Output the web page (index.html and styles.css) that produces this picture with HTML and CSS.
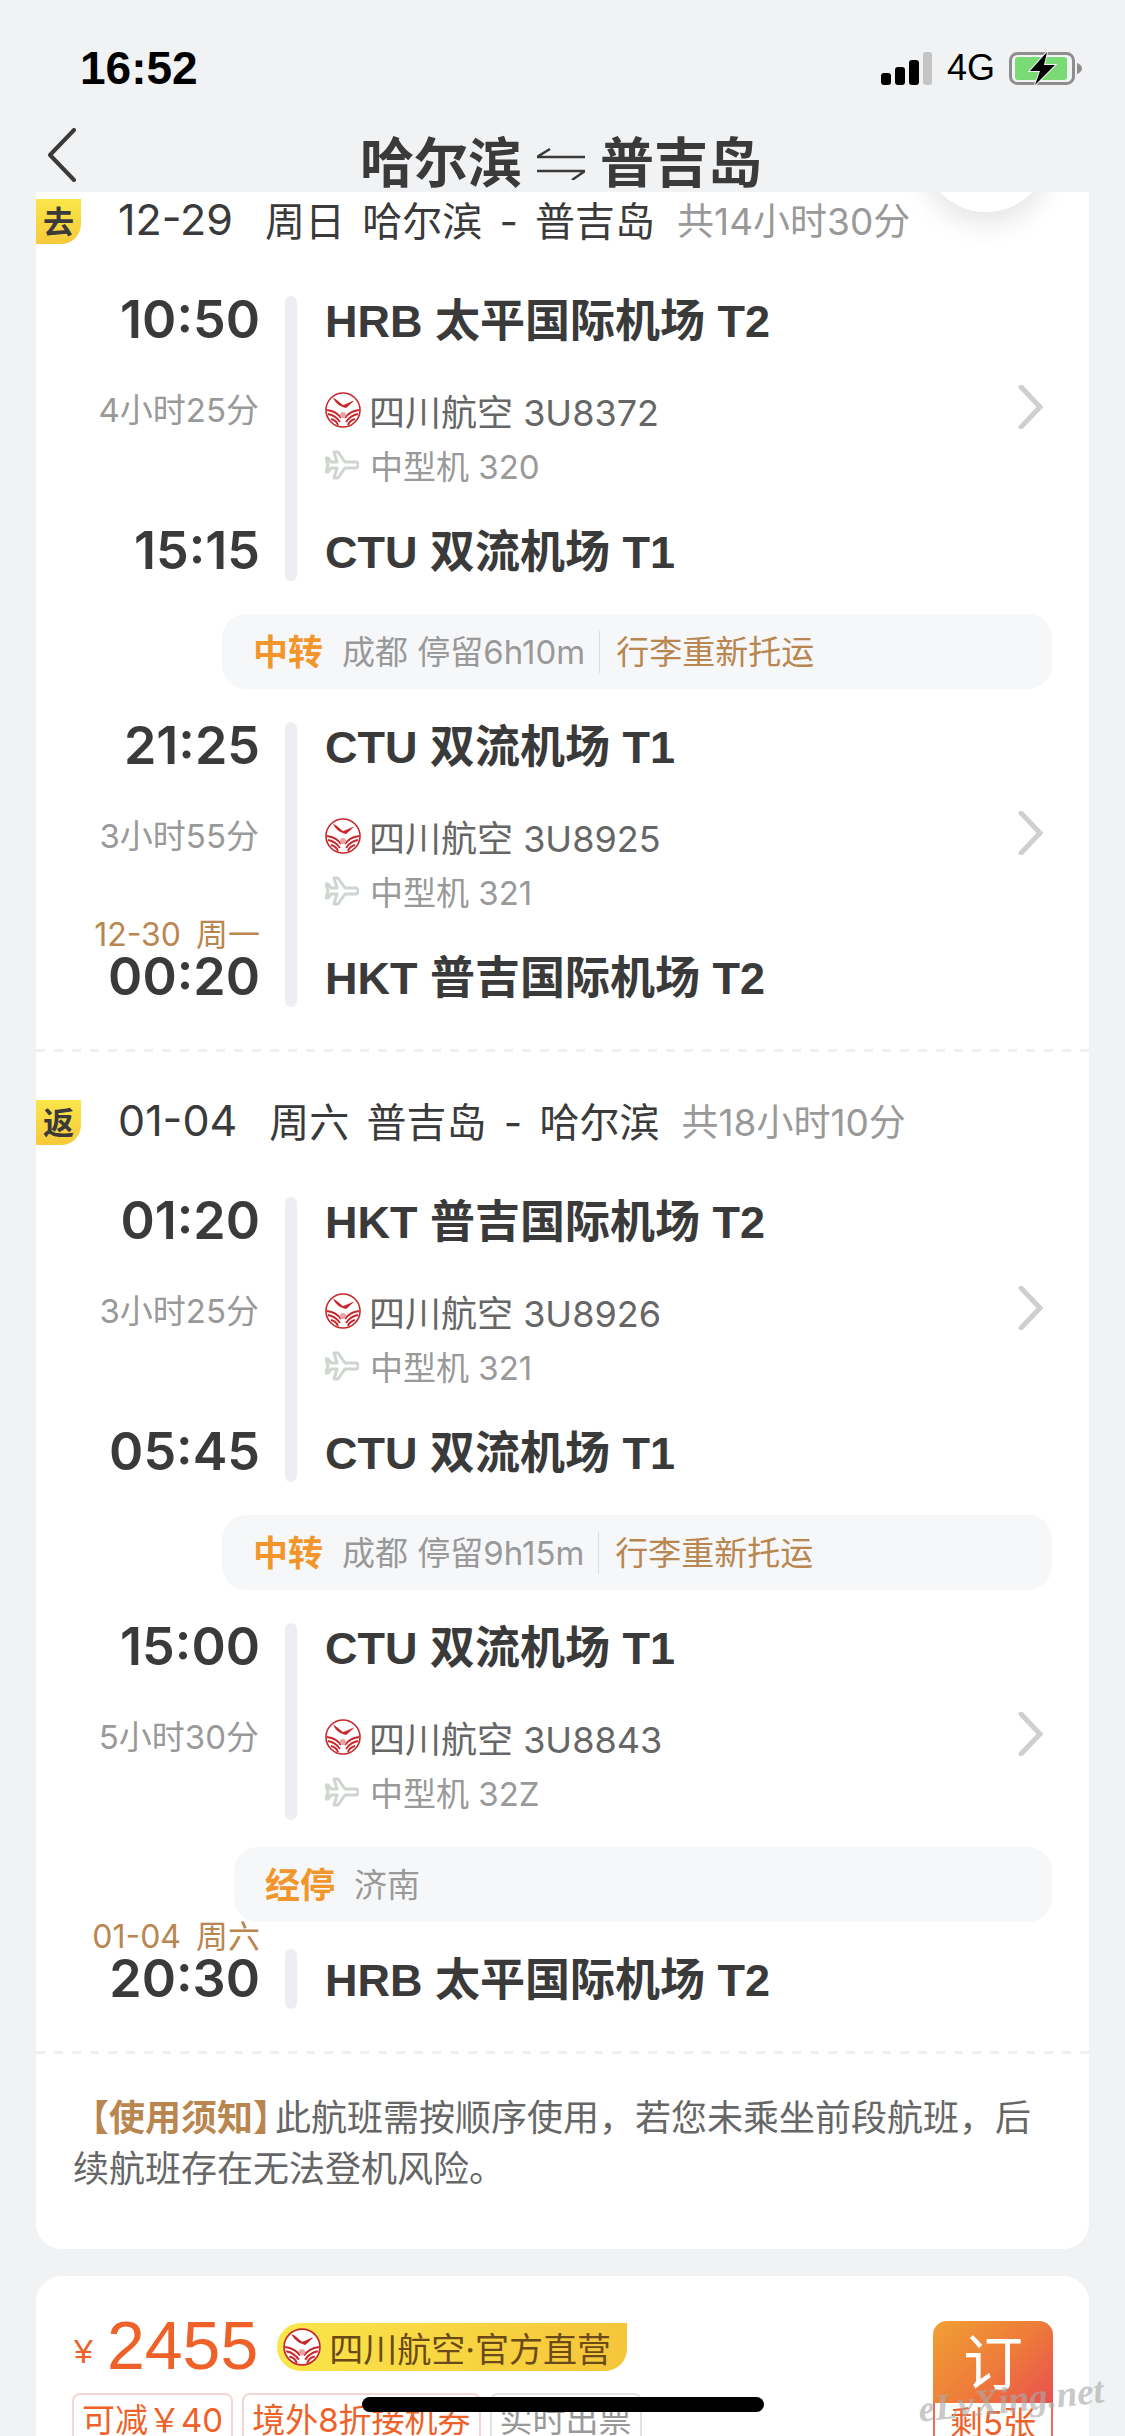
FILE: index.html
```html
<!DOCTYPE html>
<html lang="zh-CN">
<head>
	<meta charset="utf8">
	<title>哈尔滨 - 普吉岛</title>
	<link rel="stylesheet" href="styles.css">
</head>
<body>
	<svg class="defs" width="0" height="0">
		<symbol id="logo" viewBox="0 0 36 36">
			<circle cx="18" cy="18" r="17" fill="#fff" stroke="#c8272b" stroke-width="1.6"/>
			<path d="M8 6C12 7 15 11 18 13L21 12C24 11 26 9 29 9C26 11 24 14 21 16C16 15 11 12 8 6Z" fill="#c8272b"/>
			<path d="M2 18C9 19 14 23 16 26M3 22C9 23 13 27 15 30M6 27C10 28 12 30 13 33M34 18C27 19 22 23 20 26M33 22C27 23 23 27 21 30M30 27C26 28 24 30 23 33" fill="none" stroke="#c8272b" stroke-width="1.9"/>
			<circle cx="18" cy="23" r="3" fill="#e9a3a3"/>
		</symbol>
		<symbol id="plane" viewBox="0 0 34 30">
			<path d="M31 12C34 13 34 17 31 18L20 18L13 28L9 28L12 18L6 18L3 22L1 22L3 15L1 8L3 8L6 12L12 12L9 2L13 2L20 12Z" fill="#fff" stroke="#ced6cf" stroke-width="3" stroke-linejoin="round"/>
		</symbol>
		<symbol id="chevron" viewBox="0 0 25 44">
			<path d="M3 2L22 22L3 42" fill="none" stroke="#cfcfcf" stroke-width="5" stroke-linecap="round"/>
		</symbol>
	</svg>

	<div class="page">
		<div class="status">
			<span class="clock">16:52</span>
			<div class="status-right">
				<svg class="signal" width="51" height="33" viewBox="0 0 51 33">
					<rect x="0" y="21" width="10" height="12" rx="3" fill="#000"/>
					<rect x="14" y="15" width="10" height="18" rx="3" fill="#000"/>
					<rect x="28" y="8" width="10" height="25" rx="3" fill="#000"/>
					<rect x="42" y="0" width="9" height="33" rx="3" fill="#c4c4c4"/>
				</svg>
				<span class="net">4G</span>
				<svg class="battery" width="73" height="33" viewBox="0 0 73 33">
					<rect x="1.5" y="1.5" width="63" height="30" rx="7" fill="none" stroke="#8e8e8e" stroke-width="3"/>
					<rect x="6" y="5" width="52" height="23" rx="3" fill="#7ada76"/>
					<path d="M68 11C71 12 73 14 73 16.5C73 19 71 21 68 22Z" fill="#8e8e8e"/>
					<path d="M38 0L21 19L31 19L26 33L46 13L35 13Z" fill="#000" stroke="#f1f2f4" stroke-width="2" paint-order="stroke"/>
				</svg>
			</div>
		</div>

		<div class="nav">
			<svg class="back" width="30" height="54" viewBox="0 0 30 54">
				<path d="M27 2L3 27L27 52" fill="none" stroke="#3a3a3a" stroke-width="4" stroke-linecap="round" stroke-linejoin="round"/>
			</svg>
			<div class="route-title">
				<span>哈尔滨</span>
				<svg width="48" height="32" viewBox="0 0 48 32">
					<path d="M0 9H48M0 9L13 1M0 23H48M48 23L35 32" fill="none" stroke="#3a3a3a" stroke-width="2.5"/>
				</svg>
				<span>普吉岛</span>
			</div>
		</div>

		<div class="card detail">
			<div class="bubble"></div>

			<div class="day-head">
				<span class="tag">去</span>
				<span class="day-date">12-29</span>
				<span class="day-route">周日 哈尔滨 - 普吉岛</span>
				<span class="day-total">共14小时30分</span>
			</div>

			<div class="leg">
				<div class="leg-left">
					<div class="time">10:50</div>
					<div class="dur">4小时25分</div>
					<div class="time end">15:15</div>
				</div>
				<div class="bar"></div>
				<div class="leg-right">
					<div class="station">HRB 太平国际机场 T2</div>
					<div class="airline">
						<svg class="logo-icon"><use href="#logo"/></svg>
						<span>四川航空 3U8372</span>
						<svg class="chevron"><use href="#chevron"/></svg>
					</div>
					<div class="plane"><svg class="plane-icon"><use href="#plane"/></svg><span>中型机 320</span></div>
					<div class="station end">CTU 双流机场 T1</div>
				</div>
			</div>

			<div class="pill transfer">
				<b>中转</b><span class="pill-gray">成都 停留6h10m</span><i class="pill-line"></i><span class="pill-brown">行李重新托运</span>
			</div>

			<div class="leg">
				<div class="leg-left">
					<div class="time">21:25</div>
					<div class="dur">3小时55分</div>
					<div class="time end"><span class="next-date">12-30 周一</span>00:20</div>
				</div>
				<div class="bar"></div>
				<div class="leg-right">
					<div class="station">CTU 双流机场 T1</div>
					<div class="airline">
						<svg class="logo-icon"><use href="#logo"/></svg>
						<span>四川航空 3U8925</span>
						<svg class="chevron"><use href="#chevron"/></svg>
					</div>
					<div class="plane"><svg class="plane-icon"><use href="#plane"/></svg><span>中型机 321</span></div>
					<div class="station end">HKT 普吉国际机场 T2</div>
				</div>
			</div>

			<div class="dashed"></div>

			<div class="day-head">
				<span class="tag">返</span>
				<span class="day-date">01-04</span>
				<span class="day-route">周六 普吉岛 - 哈尔滨</span>
				<span class="day-total">共18小时10分</span>
			</div>

			<div class="leg">
				<div class="leg-left">
					<div class="time">01:20</div>
					<div class="dur">3小时25分</div>
					<div class="time end">05:45</div>
				</div>
				<div class="bar"></div>
				<div class="leg-right">
					<div class="station">HKT 普吉国际机场 T2</div>
					<div class="airline">
						<svg class="logo-icon"><use href="#logo"/></svg>
						<span>四川航空 3U8926</span>
						<svg class="chevron"><use href="#chevron"/></svg>
					</div>
					<div class="plane"><svg class="plane-icon"><use href="#plane"/></svg><span>中型机 321</span></div>
					<div class="station end">CTU 双流机场 T1</div>
				</div>
			</div>

			<div class="pill transfer">
				<b>中转</b><span class="pill-gray">成都 停留9h15m</span><i class="pill-line"></i><span class="pill-brown">行李重新托运</span>
			</div>

			<div class="leg leg-stop">
				<div class="leg-left">
					<div class="time">15:00</div>
					<div class="dur">5小时30分</div>
				</div>
				<div class="bar"></div>
				<div class="leg-right">
					<div class="station">CTU 双流机场 T1</div>
					<div class="airline">
						<svg class="logo-icon"><use href="#logo"/></svg>
						<span>四川航空 3U8843</span>
						<svg class="chevron"><use href="#chevron"/></svg>
					</div>
					<div class="plane"><svg class="plane-icon"><use href="#plane"/></svg><span>中型机 32Z</span></div>
				</div>
			</div>

			<div class="pill stop">
				<b>经停</b><span class="pill-gray">济南</span>
			</div>

			<div class="leg leg-last">
				<div class="leg-left">
					<div class="time end"><span class="next-date">01-04 周六</span>20:30</div>
				</div>
				<div class="bar"></div>
				<div class="leg-right">
					<div class="station end">HRB 太平国际机场 T2</div>
				</div>
			</div>

			<div class="dashed"></div>

			<p class="notice"><b>【使用须知】</b>此航班需按顺序使用，若您未乘坐前段航班，后续航班存在无法登机风险。</p>
		</div>

		<div class="card price-card">
			<div class="price-main">
				<div class="price-row">
					<span class="yen">¥</span>
					<span class="amount">2455</span>
					<span class="badge"><svg class="badge-logo"><use href="#logo"/></svg>四川航空·官方直营</span>
				</div>
				<div class="tags">
					<span class="chip">可减￥40</span>
					<span class="chip">境外8折接机券</span>
					<span class="chip chip-gray">实时出票</span>
				</div>
			</div>
			<div class="book">
				<div class="book-top">订</div>
				<div class="book-left">剩5张</div>
			</div>
		</div>

		<div class="home-bar"></div>
		<div class="watermark">eLvXing.net</div>
	</div>
</body>
</html>
```

FILE: styles.css
```css
html, body{
	margin: 0;
	padding: 0;
}
body{
	font-family: Inter, "Noto Sans CJK SC", sans-serif;
	color: #3a3a3a;
}
.defs{
	position: absolute;
}
.page{
	position: relative;
	width: 1125px;
	height: 2436px;
	overflow: hidden;
	background-color: #f1f2f4;
}

/* status bar */
.status{
	display: flex;
	justify-content: space-between;
	align-items: flex-start;
	box-sizing: border-box;
	height: 130px;
	padding: 44px 43px 0 80px;
	color: #000;
}
.clock{
	font-family: "Liberation Sans", sans-serif;
	font-size: 46px;
	font-weight: bold;
	line-height: 48px;
}
.status-right{
	display: flex;
	align-items: center;
	gap: 15px;
	height: 48px;
}
.net{
	margin-right: -1px;
	font-family: "Liberation Sans", sans-serif;
	font-size: 36px;
	line-height: 48px;
}

/* nav */
.nav{
	display: grid;
	grid-template-columns: 1fr auto 1fr;
	align-items: center;
	height: 62px;
	padding-right: 3px;
}
.back{
	margin: -12px 0 0 47px;
}
.route-title{
	grid-column: 2;
	display: flex;
	align-items: center;
	gap: 15px;
	padding-top: 5px;
	font-size: 54px;
	font-weight: bold;
	line-height: 57px;
}

/* cards */
.card{
	position: relative;
	margin: 0 36px;
	background-color: #fff;
	overflow: hidden;
}
.detail{
	padding-top: 7px;
	border-radius: 0 0 26px 26px;
}
.bubble{
	position: absolute;
	top: -108px;
	left: 886px;
	width: 128px;
	height: 128px;
	border-radius: 50%;
	background-color: #fff;
	box-shadow: 0 12px 26px rgba(0,0,0,.1);
}

.day-head{
	position: relative;
	display: flex;
	align-items: center;
	height: 45px;
	margin-bottom: 52px;
	font-size: 40px;
}
.tag{
	width: 45px;
	height: 45px;
	line-height: 45px;
	text-align: center;
	font-size: 31px;
	font-weight: bold;
	border-radius: 0 0 20px 0;
	background: linear-gradient(#fbe64a, #f6c93a);
}
.day-date{
	margin-left: 37px;
	margin-right: 32px;
	padding-bottom: 6px;
	font-size: 43px;
}
.day-route{
	margin-right: 22px;
	padding-bottom: 6px;
	font-size: 40px;
	word-spacing: 6px;
}
.day-total{
	padding-bottom: 6px;
	font-size: 37px;
	color: #999;
}

/* flight leg */
.leg{
	display: flex;
	height: 285px;
}
.leg-stop{
	height: 197px;
}
.leg-last{
	height: 60px;
}
.leg-left{
	display: flex;
	flex-direction: column;
	align-items: flex-end;
	flex: none;
	width: 224px;
}
.time{
	position: relative;
	height: 48px;
	line-height: 48px;
	font-size: 52px;
	font-weight: 600;
}
.end{
	margin-top: auto;
	margin-bottom: 6px;
}
.dur{
	margin: 42px 1px 0 0;
	height: 48px;
	line-height: 48px;
	font-size: 33px;
	color: #999;
}
.next-date{
	position: absolute;
	right: 0;
	bottom: 48px;
	height: 36px;
	line-height: 36px;
	white-space: nowrap;
	font-size: 32px;
	font-weight: normal;
	word-spacing: 6px;
	color: #b98650;
}
.bar{
	flex: none;
	width: 12px;
	margin-left: 25px;
	border-radius: 6px;
	background-color: #eceef2;
}
.leg-right{
	display: flex;
	flex-direction: column;
	flex: 1;
	padding: 0 46px 0 28px;
}
.station{
	height: 48px;
	line-height: 52px;
	font-family: "Liberation Sans", "Noto Sans CJK SC", sans-serif;
	font-size: 45px;
	font-weight: bold;
	white-space: nowrap;
}
.airline{
	display: flex;
	align-items: center;
	height: 48px;
	margin-top: 42px;
	font-size: 36px;
	color: #666;
}
.logo-icon{
	width: 36px;
	height: 36px;
	margin-right: 8px;
}
.chevron{
	width: 25px;
	height: 44px;
	margin: -6px 0 0 auto;
}
.plane{
	display: flex;
	align-items: center;
	height: 48px;
	margin-top: 7px;
	font-size: 33px;
	color: #999;
}
.plane-icon{
	width: 34px;
	height: 30px;
	margin-right: 11px;
}

/* transfer and stop pills */
.pill{
	display: flex;
	align-items: center;
	box-sizing: border-box;
	height: 75px;
	padding-bottom: 4px;
	border-radius: 24px;
	background-color: #f6f7f9;
	font-size: 33px;
	white-space: nowrap;
}
.pill b{
	margin-right: 19px;
	font-size: 35px;
	color: #f2962c;
}
.transfer{
	margin: 33px 37px 33px 186px;
	padding-left: 31px;
}
.stop{
	margin: 27px 37px 27px 198px;
	padding-left: 31px;
}
.pill-gray{
	color: #999;
}
.pill-line{
	width: 1px;
	height: 42px;
	margin: 4px 16px 0 14px;
	background-color: #ddd;
}
.pill-brown{
	color: #b98650;
}

.dashed{
	height: 3px;
	margin-top: 42px;
	background: repeating-linear-gradient(90deg, #eff0f2 0, #eff0f2 9px, transparent 9px, transparent 18px);
}
.dashed + .day-head{
	margin-top: 48px;
}
.notice{
	margin: 0;
	padding: 39px 54px 54px 37px;
	font-size: 36px;
	line-height: 51px;
	color: #666;
}
.notice b{
	margin-right: -14px;
	color: #b98650;
}

/* price card */
.price-card{
	display: flex;
	justify-content: space-between;
	height: 200px;
	margin-top: 27px;
	border-radius: 26px 26px 0 0;
}
.price-main{
	padding: 42px 0 0 36px;
}
.price-row{
	display: flex;
	align-items: center;
	height: 54px;
	color: #ee6229;
}
.yen{
	margin: 12px 14px 0 2px;
	font-family: "Liberation Sans", sans-serif;
	font-size: 34px;
}
.amount{
	font-family: "Liberation Sans", sans-serif;
	font-size: 68px;
	line-height: 54px;
}
.badge{
	display: flex;
	align-items: center;
	height: 48px;
	margin: 4px 0 0 19px;
	padding-right: 16px;
	border-radius: 24px 0 22px 24px;
	background: linear-gradient(90deg, #fbe64a, #f5c53a);
	font-size: 34px;
	color: #6b4a17;
}
.badge-logo{
	width: 38px;
	height: 38px;
	margin: 0 8px 0 6px;
}
.tags{
	display: flex;
	gap: 9px;
	margin-top: 21px;
}
.chip{
	height: 50px;
	line-height: 50px;
	padding: 0 8px;
	border: 2px solid #f6d5d5;
	border-radius: 8px;
	font-size: 33px;
	color: #ee6229;
}
.chip-gray{
	border-color: #e2e2e2;
	color: #999;
}
.book{
	flex: none;
	width: 120px;
	margin: 45px 36px 0 0;
}
.book-top{
	height: 82px;
	line-height: 84px;
	text-align: center;
	font-size: 60px;
	color: #fff;
	border-radius: 14px 14px 0 0;
	background: linear-gradient(135deg, #f0a033, #ee7a3a 55%, #e85050);
}
.book-left{
	box-sizing: border-box;
	height: 50px;
	line-height: 40px;
	text-align: center;
	font-size: 33px;
	color: #ee6229;
	border: 2px solid #ee6a5a;
	border-top: none;
}

/* things over the page */
.home-bar{
	position: absolute;
	left: 362px;
	top: 2397px;
	width: 402px;
	height: 15px;
	border-radius: 8px;
	background-color: #000;
}
.watermark{
	position: absolute;
	left: 918px;
	top: 2378px;
	font-family: "Liberation Serif", serif;
	font-style: italic;
	font-weight: bold;
	font-size: 37px;
	color: rgba(170,170,170,.65);
	transform: rotate(-6deg);
}
```
